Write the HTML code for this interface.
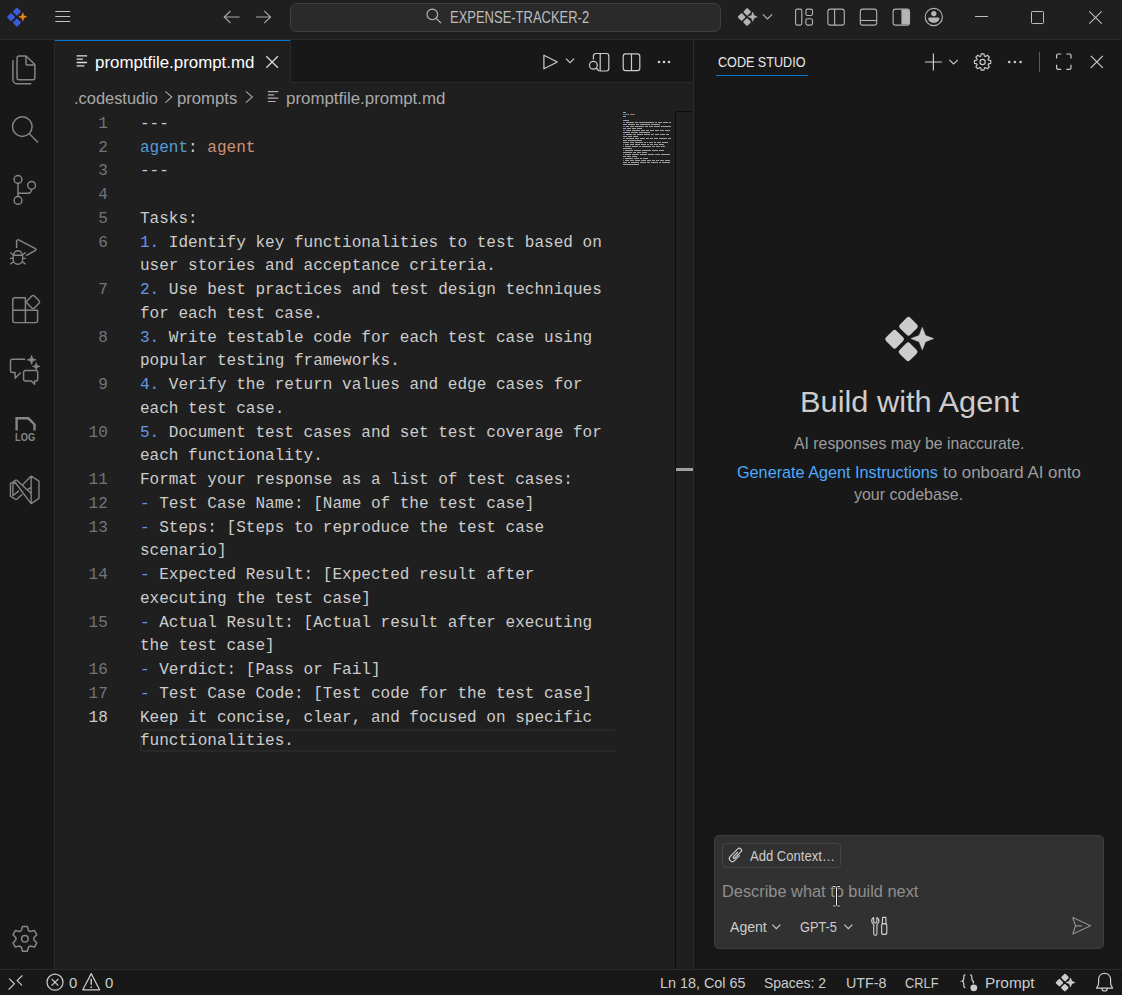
<!DOCTYPE html>
<html><head><meta charset="utf-8"><style>
html,body{margin:0;padding:0;}
body{width:1122px;height:995px;overflow:hidden;position:relative;background:#1f1f1f;font-family:"Liberation Sans",sans-serif;}
.t{position:absolute;white-space:pre;transform-origin:0 0;}
svg{overflow:visible}
</style></head><body>
<div style="position:absolute;left:0px;top:0px;width:1122px;height:39px;background:#1f1f1f;"></div>
<div style="position:absolute;left:0px;top:39px;width:1122px;height:1px;background:#2b2b2b;"></div>
<div style="position:absolute;left:0px;top:40px;width:54px;height:929px;background:#181818;"></div>
<div style="position:absolute;left:54px;top:40px;width:1px;height:929px;background:#2b2b2b;"></div>
<div style="position:absolute;left:55px;top:40px;width:638px;height:42px;background:#181818;"></div>
<div style="position:absolute;left:55px;top:82px;width:638px;height:1px;background:#2b2b2b;"></div>
<div style="position:absolute;left:55px;top:40px;width:235px;height:43px;background:#1f1f1f;"></div>
<div style="position:absolute;left:55px;top:40px;width:235px;height:1px;background:#0078d4;"></div>
<div style="position:absolute;left:290px;top:40px;width:1px;height:42px;background:#2b2b2b;"></div>
<div style="position:absolute;left:55px;top:83px;width:638px;height:886px;background:#1f1f1f;"></div>
<div style="position:absolute;left:693px;top:40px;width:1px;height:929px;background:#2b2b2b;"></div>
<div style="position:absolute;left:694px;top:40px;width:428px;height:929px;background:#181818;"></div>
<div style="position:absolute;left:0px;top:969px;width:1122px;height:1px;background:#2b2b2b;"></div>
<div style="position:absolute;left:0px;top:970px;width:1122px;height:25px;background:#181818;"></div>
<svg style="position:absolute;left:0px;top:0px;" width="40" height="40" viewBox="0 0 40 40" fill="none"><rect x="13.86" y="8.56" width="6.08" height="6.08" rx="0.60" fill="#3b5bdb" transform="rotate(45 16.90 11.60)"/><rect x="8.06" y="14.06" width="6.08" height="6.08" rx="0.60" fill="#3b5bdb" transform="rotate(45 11.10 17.10)"/><rect x="13.86" y="19.56" width="6.08" height="6.08" rx="0.60" fill="#3b5bdb" transform="rotate(45 16.90 22.60)"/><path d="M22.80 12.90 L23.85 15.75 L26.70 16.80 L23.85 17.85 L22.80 20.70 L21.75 17.85 L18.90 16.80 L21.75 15.75 Z" fill="#f0861a" stroke="#f0861a" stroke-width="0.6" stroke-linejoin="round"/></svg>
<svg style="position:absolute;left:50px;top:0px;" width="30" height="40" viewBox="0 0 30 40" fill="none"><path d="M5.3 11.5H20.2M5.3 16.5H20.2M5.3 21.5H20.2" stroke="#c0c0c0" stroke-width="1"/></svg>
<svg style="position:absolute;left:215px;top:0px;" width="70" height="40" viewBox="0 0 70 40" fill="none"><path d="M24.5 17H9.5M15.5 11L9.2 17L15.5 23" stroke="#a8a8a8" stroke-width="1.1" stroke-linejoin="miter"/><path d="M41 17H55.6M49.2 10.9L55.6 17L49.2 23.1" stroke="#a8a8a8" stroke-width="1.1"/></svg>
<div style="position:absolute;left:290px;top:3px;width:431px;height:29px;background:#2a2a2a;box-sizing:border-box;border:1px solid #3f3f3f;border-radius:7px;"></div>
<svg style="position:absolute;left:420px;top:0px;" width="30" height="34" viewBox="0 0 30 34" fill="none"><circle cx="12.3" cy="14.4" r="5.3" stroke="#bdbdbd" stroke-width="1.1"/><path d="M16.2 18.3L21 23.2" stroke="#bdbdbd" stroke-width="1.2"/></svg>
<div class="t" style="left:449.80px;top:9.00px;font-size:16.40px;line-height:16.40px;color:#bdbdbd;font-family:'Liberation Sans', sans-serif;transform:scaleX(0.7914);">EXPENSE-TRACKER-2</div>
<svg style="position:absolute;left:730px;top:0px;" width="40" height="34" viewBox="0 0 40 34" fill="none"><rect x="14.26" y="8.94" width="5.88" height="5.88" rx="1.04" fill="#b4b4b4" transform="rotate(45 17.20 11.88)"/><rect x="8.70" y="14.10" width="5.88" height="5.88" rx="1.04" fill="#b4b4b4" transform="rotate(45 11.64 17.04)"/><rect x="14.10" y="19.14" width="5.88" height="5.88" rx="1.04" fill="#b4b4b4" transform="rotate(45 17.04 22.08)"/><path d="M22.72 12.32 L23.97 15.55 L27.20 16.80 L23.97 18.05 L22.72 21.28 L21.47 18.05 L18.24 16.80 L21.47 15.55 Z" fill="#b4b4b4" stroke="#b4b4b4" stroke-width="0.6" stroke-linejoin="round"/></svg>
<svg style="position:absolute;left:755px;top:0px;" width="24" height="34" viewBox="0 0 24 34" fill="none"><path d="M7.9 14.3L12.5 18.9L17.1 14.3" stroke="#b4b4b4" stroke-width="1.1"/></svg>
<svg style="position:absolute;left:790px;top:0px;" width="160" height="34" viewBox="0 0 160 34" fill="none"><rect x="5.6" y="9.1" width="6.2" height="16" rx="1.6" stroke="#b4b4b4" stroke-width="1.1"/><rect x="15.9" y="9.1" width="6.6" height="6.4" rx="1.6" stroke="#b4b4b4" stroke-width="1.1"/><rect x="15.9" y="18.7" width="6.6" height="6.4" rx="1.6" stroke="#b4b4b4" stroke-width="1.1"/><rect x="37.9" y="9.1" width="16.4" height="16" rx="2.4" stroke="#b4b4b4" stroke-width="1.1"/><path d="M44.6 9.1V25.1" stroke="#b4b4b4" stroke-width="1.1"/><rect x="70.3" y="9.1" width="16.4" height="16" rx="2.4" stroke="#b4b4b4" stroke-width="1.1"/><path d="M70.3 20.5H86.7" stroke="#b4b4b4" stroke-width="1.1"/><rect x="103.1" y="9.1" width="16.4" height="16" rx="2.4" stroke="#b4b4b4" stroke-width="1.1"/><path d="M111.4 9.6H117.1A1.9 1.9 0 0 1 119 11.5V22.7A1.9 1.9 0 0 1 117.1 24.6H111.4Z" fill="#b4b4b4"/><circle cx="143.8" cy="17" r="8.6" stroke="#b4b4b4" stroke-width="1.1"/><circle cx="143.8" cy="13.6" r="2.6" fill="#b4b4b4"/><path d="M139.3 17.6H148.3A1 1 0 0 1 149.3 18.6C149.3 21.2 147 22.8 143.8 22.8C140.6 22.8 138.3 21.2 138.3 18.6A1 1 0 0 1 139.3 17.6Z" fill="#b4b4b4"/></svg>
<svg style="position:absolute;left:960px;top:0px;" width="162" height="34" viewBox="0 0 162 34" fill="none"><path d="M15 16.5H28" stroke="#bdbdbd" stroke-width="1"/><rect x="71.5" y="11.5" width="12" height="12" rx="0.8" stroke="#bdbdbd" stroke-width="1"/><path d="M129.3 11.3L141.7 23.7M141.7 11.3L129.3 23.7" stroke="#bdbdbd" stroke-width="1.1"/></svg>
<svg style="position:absolute;left:70px;top:40px;" width="30" height="40" viewBox="0 0 30 40" fill="none"><path d="M6.60 15.90H17.10M6.60 19.20H12.90M6.60 22.50H17.10M6.60 25.80H14.40" stroke="#e0e0e0" stroke-width="1.30"/></svg>
<div class="t" style="left:95.00px;top:54.75px;font-size:16.70px;line-height:16.70px;color:#ffffff;font-family:'Liberation Sans', sans-serif;transform:scaleX(1.0109);">promptfile.prompt.md</div>
<svg style="position:absolute;left:260px;top:40px;" width="30" height="40" viewBox="0 0 30 40" fill="none"><path d="M6.3 16.2L17.9 27.8M17.9 16.2L6.3 27.8" stroke="#dddddd" stroke-width="1.25"/></svg>
<svg style="position:absolute;left:535px;top:40px;" width="150" height="40" viewBox="0 0 150 40" fill="none"><path d="M8.9 15.2V28.8L22.3 22Z" stroke="#cccccc" stroke-width="1.2" stroke-linejoin="round"/><path d="M31 18.6L35 22.6L39 18.6" stroke="#cccccc" stroke-width="1.1"/><path d="M58.4 19.6V15.9A2.4 2.4 0 0 1 60.8 13.5H71.4A2.4 2.4 0 0 1 73.8 15.9V28.6A2.4 2.4 0 0 1 71.4 31H64.4M65.2 13.5V31" stroke="#cccccc" stroke-width="1.2"/><circle cx="58.4" cy="25.2" r="3.9" stroke="#cccccc" stroke-width="1.2"/><path d="M61.2 28L64.2 31" stroke="#cccccc" stroke-width="1.25"/><rect x="88.2" y="13.8" width="16.6" height="16.8" rx="2.4" stroke="#cccccc" stroke-width="1.2"/><path d="M96.5 13.8V30.6" stroke="#cccccc" stroke-width="1.2"/><circle cx="124" cy="22" r="1.3" fill="#cccccc"/><circle cx="129" cy="22" r="1.3" fill="#cccccc"/><circle cx="134" cy="22" r="1.3" fill="#cccccc"/></svg>
<div class="t" style="left:73.80px;top:90.00px;font-size:16.40px;line-height:16.40px;color:#a9a9a9;font-family:'Liberation Sans', sans-serif;transform:scaleX(1.0014);">.codestudio</div>
<svg style="position:absolute;left:160px;top:83px;" width="20" height="28" viewBox="0 0 20 28" fill="none"><path d="M5.4 8.3L11.8 14L5.4 19.7" stroke="#a9a9a9" stroke-width="1.1"/></svg>
<div class="t" style="left:177.30px;top:90.00px;font-size:16.40px;line-height:16.40px;color:#a9a9a9;font-family:'Liberation Sans', sans-serif;transform:scaleX(1.0179);">prompts</div>
<svg style="position:absolute;left:240px;top:83px;" width="20" height="28" viewBox="0 0 20 28" fill="none"><path d="M5.9 8.3L12.3 14L5.9 19.7" stroke="#a9a9a9" stroke-width="1.1"/></svg>
<svg style="position:absolute;left:260px;top:83px;" width="30" height="28" viewBox="0 0 30 28" fill="none"><path d="M7.80 8.60H18.30M7.80 11.90H14.10M7.80 15.20H18.30M7.80 18.50H15.60" stroke="#b0b0b0" stroke-width="1.20"/></svg>
<div class="t" style="left:285.60px;top:91.35px;font-size:16.70px;line-height:16.70px;color:#a9a9a9;font-family:'Liberation Sans', sans-serif;transform:scaleX(1.0109);">promptfile.prompt.md</div>
<div style="position:absolute;left:140px;top:729px;width:475px;height:23px;background:transparent;box-sizing:border-box;border:2px solid #282828;border-right:none;"></div>
<div class="t" style="left:98.17px;top:115.78px;font-size:16.04px;line-height:16.04px;color:#6e7681;font-family:'Liberation Mono', monospace;">1</div>
<div class="t" style="left:140px;top:115.78px;font-size:16.04px;line-height:16.04px;font-family:'Liberation Mono',monospace;"><span style="color:#cccccc">---</span></div>
<div class="t" style="left:98.17px;top:139.53px;font-size:16.04px;line-height:16.04px;color:#6e7681;font-family:'Liberation Mono', monospace;">2</div>
<div class="t" style="left:140px;top:139.53px;font-size:16.04px;line-height:16.04px;font-family:'Liberation Mono',monospace;"><span style="color:#569cd6">agent</span><span style="color:#cccccc">: </span><span style="color:#ce9178">agent</span></div>
<div class="t" style="left:98.17px;top:163.28px;font-size:16.04px;line-height:16.04px;color:#6e7681;font-family:'Liberation Mono', monospace;">3</div>
<div class="t" style="left:140px;top:163.28px;font-size:16.04px;line-height:16.04px;font-family:'Liberation Mono',monospace;"><span style="color:#cccccc">---</span></div>
<div class="t" style="left:98.17px;top:187.03px;font-size:16.04px;line-height:16.04px;color:#6e7681;font-family:'Liberation Mono', monospace;">4</div>
<div class="t" style="left:98.17px;top:210.78px;font-size:16.04px;line-height:16.04px;color:#6e7681;font-family:'Liberation Mono', monospace;">5</div>
<div class="t" style="left:140px;top:210.78px;font-size:16.04px;line-height:16.04px;font-family:'Liberation Mono',monospace;"><span style="color:#cccccc">Tasks:</span></div>
<div class="t" style="left:98.17px;top:234.53px;font-size:16.04px;line-height:16.04px;color:#6e7681;font-family:'Liberation Mono', monospace;">6</div>
<div class="t" style="left:140px;top:234.53px;font-size:16.04px;line-height:16.04px;font-family:'Liberation Mono',monospace;"><span style="color:#6796e6">1.</span><span style="color:#cccccc"> Identify key functionalities to test based on</span></div>
<div class="t" style="left:140px;top:258.28px;font-size:16.04px;line-height:16.04px;font-family:'Liberation Mono',monospace;"><span style="color:#cccccc">user stories and acceptance criteria.</span></div>
<div class="t" style="left:98.17px;top:282.03px;font-size:16.04px;line-height:16.04px;color:#6e7681;font-family:'Liberation Mono', monospace;">7</div>
<div class="t" style="left:140px;top:282.03px;font-size:16.04px;line-height:16.04px;font-family:'Liberation Mono',monospace;"><span style="color:#6796e6">2.</span><span style="color:#cccccc"> Use best practices and test design techniques</span></div>
<div class="t" style="left:140px;top:305.78px;font-size:16.04px;line-height:16.04px;font-family:'Liberation Mono',monospace;"><span style="color:#cccccc">for each test case.</span></div>
<div class="t" style="left:98.17px;top:329.53px;font-size:16.04px;line-height:16.04px;color:#6e7681;font-family:'Liberation Mono', monospace;">8</div>
<div class="t" style="left:140px;top:329.53px;font-size:16.04px;line-height:16.04px;font-family:'Liberation Mono',monospace;"><span style="color:#6796e6">3.</span><span style="color:#cccccc"> Write testable code for each test case using</span></div>
<div class="t" style="left:140px;top:353.28px;font-size:16.04px;line-height:16.04px;font-family:'Liberation Mono',monospace;"><span style="color:#cccccc">popular testing frameworks.</span></div>
<div class="t" style="left:98.17px;top:377.03px;font-size:16.04px;line-height:16.04px;color:#6e7681;font-family:'Liberation Mono', monospace;">9</div>
<div class="t" style="left:140px;top:377.03px;font-size:16.04px;line-height:16.04px;font-family:'Liberation Mono',monospace;"><span style="color:#6796e6">4.</span><span style="color:#cccccc"> Verify the return values and edge cases for</span></div>
<div class="t" style="left:140px;top:400.78px;font-size:16.04px;line-height:16.04px;font-family:'Liberation Mono',monospace;"><span style="color:#cccccc">each test case.</span></div>
<div class="t" style="left:88.55px;top:424.53px;font-size:16.04px;line-height:16.04px;color:#6e7681;font-family:'Liberation Mono', monospace;">10</div>
<div class="t" style="left:140px;top:424.53px;font-size:16.04px;line-height:16.04px;font-family:'Liberation Mono',monospace;"><span style="color:#6796e6">5.</span><span style="color:#cccccc"> Document test cases and set test coverage for</span></div>
<div class="t" style="left:140px;top:448.28px;font-size:16.04px;line-height:16.04px;font-family:'Liberation Mono',monospace;"><span style="color:#cccccc">each functionality.</span></div>
<div class="t" style="left:88.55px;top:472.03px;font-size:16.04px;line-height:16.04px;color:#6e7681;font-family:'Liberation Mono', monospace;">11</div>
<div class="t" style="left:140px;top:472.03px;font-size:16.04px;line-height:16.04px;font-family:'Liberation Mono',monospace;"><span style="color:#cccccc">Format your response as a list of test cases:</span></div>
<div class="t" style="left:88.55px;top:495.78px;font-size:16.04px;line-height:16.04px;color:#6e7681;font-family:'Liberation Mono', monospace;">12</div>
<div class="t" style="left:140px;top:495.78px;font-size:16.04px;line-height:16.04px;font-family:'Liberation Mono',monospace;"><span style="color:#6796e6">-</span><span style="color:#cccccc"> Test Case Name: [Name of the test case]</span></div>
<div class="t" style="left:88.55px;top:519.53px;font-size:16.04px;line-height:16.04px;color:#6e7681;font-family:'Liberation Mono', monospace;">13</div>
<div class="t" style="left:140px;top:519.53px;font-size:16.04px;line-height:16.04px;font-family:'Liberation Mono',monospace;"><span style="color:#6796e6">-</span><span style="color:#cccccc"> Steps: [Steps to reproduce the test case</span></div>
<div class="t" style="left:140px;top:543.28px;font-size:16.04px;line-height:16.04px;font-family:'Liberation Mono',monospace;"><span style="color:#cccccc">scenario]</span></div>
<div class="t" style="left:88.55px;top:567.03px;font-size:16.04px;line-height:16.04px;color:#6e7681;font-family:'Liberation Mono', monospace;">14</div>
<div class="t" style="left:140px;top:567.03px;font-size:16.04px;line-height:16.04px;font-family:'Liberation Mono',monospace;"><span style="color:#6796e6">-</span><span style="color:#cccccc"> Expected Result: [Expected result after</span></div>
<div class="t" style="left:140px;top:590.78px;font-size:16.04px;line-height:16.04px;font-family:'Liberation Mono',monospace;"><span style="color:#cccccc">executing the test case]</span></div>
<div class="t" style="left:88.55px;top:614.53px;font-size:16.04px;line-height:16.04px;color:#6e7681;font-family:'Liberation Mono', monospace;">15</div>
<div class="t" style="left:140px;top:614.53px;font-size:16.04px;line-height:16.04px;font-family:'Liberation Mono',monospace;"><span style="color:#6796e6">-</span><span style="color:#cccccc"> Actual Result: [Actual result after executing</span></div>
<div class="t" style="left:140px;top:638.28px;font-size:16.04px;line-height:16.04px;font-family:'Liberation Mono',monospace;"><span style="color:#cccccc">the test case]</span></div>
<div class="t" style="left:88.55px;top:662.03px;font-size:16.04px;line-height:16.04px;color:#6e7681;font-family:'Liberation Mono', monospace;">16</div>
<div class="t" style="left:140px;top:662.03px;font-size:16.04px;line-height:16.04px;font-family:'Liberation Mono',monospace;"><span style="color:#6796e6">-</span><span style="color:#cccccc"> Verdict: [Pass or Fail]</span></div>
<div class="t" style="left:88.55px;top:685.78px;font-size:16.04px;line-height:16.04px;color:#6e7681;font-family:'Liberation Mono', monospace;">17</div>
<div class="t" style="left:140px;top:685.78px;font-size:16.04px;line-height:16.04px;font-family:'Liberation Mono',monospace;"><span style="color:#6796e6">-</span><span style="color:#cccccc"> Test Case Code: [Test code for the test case]</span></div>
<div class="t" style="left:88.55px;top:709.53px;font-size:16.04px;line-height:16.04px;color:#cccccc;font-family:'Liberation Mono', monospace;">18</div>
<div class="t" style="left:140px;top:709.53px;font-size:16.04px;line-height:16.04px;font-family:'Liberation Mono',monospace;"><span style="color:#cccccc">Keep it concise, clear, and focused on specific</span></div>
<div class="t" style="left:140px;top:733.28px;font-size:16.04px;line-height:16.04px;font-family:'Liberation Mono',monospace;"><span style="color:#cccccc">functionalities.</span></div>
<div style="position:absolute;left:675px;top:111px;width:18px;height:858px;background:transparent;box-sizing:border-box;border-left:1px solid #0b0d10;border-top:1px solid #0b0d10;"></div>
<div style="position:absolute;left:676px;top:468px;width:17px;height:3px;background:#a0a0a0;"></div>
<svg style="position:absolute;left:623px;top:111px;opacity:0.72;shape-rendering:crispEdges;" width="52" height="60" viewBox="0 0 52 60" fill="none"><rect x="0" y="1.0" width="3" height="1" fill="#cccccc"/><rect x="0" y="3.0" width="5" height="1" fill="#569cd6"/><rect x="5" y="3.0" width="1" height="1" fill="#cccccc"/><rect x="7" y="3.0" width="5" height="1" fill="#ce9178"/><rect x="0" y="5.0" width="3" height="1" fill="#cccccc"/><rect x="0" y="9.0" width="6" height="1" fill="#cccccc"/><rect x="0" y="11.0" width="2" height="1" fill="#6796e6"/><rect x="3" y="11.0" width="8" height="1" fill="#cccccc"/><rect x="12" y="11.0" width="3" height="1" fill="#cccccc"/><rect x="16" y="11.0" width="15" height="1" fill="#cccccc"/><rect x="32" y="11.0" width="2" height="1" fill="#cccccc"/><rect x="35" y="11.0" width="4" height="1" fill="#cccccc"/><rect x="40" y="11.0" width="5" height="1" fill="#cccccc"/><rect x="46" y="11.0" width="2" height="1" fill="#cccccc"/><rect x="0" y="13.0" width="4" height="1" fill="#cccccc"/><rect x="5" y="13.0" width="7" height="1" fill="#cccccc"/><rect x="13" y="13.0" width="3" height="1" fill="#cccccc"/><rect x="17" y="13.0" width="10" height="1" fill="#cccccc"/><rect x="28" y="13.0" width="9" height="1" fill="#cccccc"/><rect x="0" y="15.0" width="2" height="1" fill="#6796e6"/><rect x="3" y="15.0" width="3" height="1" fill="#cccccc"/><rect x="7" y="15.0" width="4" height="1" fill="#cccccc"/><rect x="12" y="15.0" width="9" height="1" fill="#cccccc"/><rect x="22" y="15.0" width="3" height="1" fill="#cccccc"/><rect x="26" y="15.0" width="4" height="1" fill="#cccccc"/><rect x="31" y="15.0" width="6" height="1" fill="#cccccc"/><rect x="38" y="15.0" width="10" height="1" fill="#cccccc"/><rect x="0" y="17.0" width="3" height="1" fill="#cccccc"/><rect x="4" y="17.0" width="4" height="1" fill="#cccccc"/><rect x="9" y="17.0" width="4" height="1" fill="#cccccc"/><rect x="14" y="17.0" width="5" height="1" fill="#cccccc"/><rect x="0" y="19.0" width="2" height="1" fill="#6796e6"/><rect x="3" y="19.0" width="5" height="1" fill="#cccccc"/><rect x="9" y="19.0" width="8" height="1" fill="#cccccc"/><rect x="18" y="19.0" width="4" height="1" fill="#cccccc"/><rect x="23" y="19.0" width="3" height="1" fill="#cccccc"/><rect x="27" y="19.0" width="4" height="1" fill="#cccccc"/><rect x="32" y="19.0" width="4" height="1" fill="#cccccc"/><rect x="37" y="19.0" width="4" height="1" fill="#cccccc"/><rect x="42" y="19.0" width="5" height="1" fill="#cccccc"/><rect x="0" y="21.0" width="7" height="1" fill="#cccccc"/><rect x="8" y="21.0" width="7" height="1" fill="#cccccc"/><rect x="16" y="21.0" width="11" height="1" fill="#cccccc"/><rect x="0" y="23.0" width="2" height="1" fill="#6796e6"/><rect x="3" y="23.0" width="6" height="1" fill="#cccccc"/><rect x="10" y="23.0" width="3" height="1" fill="#cccccc"/><rect x="14" y="23.0" width="6" height="1" fill="#cccccc"/><rect x="21" y="23.0" width="6" height="1" fill="#cccccc"/><rect x="28" y="23.0" width="3" height="1" fill="#cccccc"/><rect x="32" y="23.0" width="4" height="1" fill="#cccccc"/><rect x="37" y="23.0" width="5" height="1" fill="#cccccc"/><rect x="43" y="23.0" width="3" height="1" fill="#cccccc"/><rect x="0" y="25.0" width="4" height="1" fill="#cccccc"/><rect x="5" y="25.0" width="4" height="1" fill="#cccccc"/><rect x="10" y="25.0" width="5" height="1" fill="#cccccc"/><rect x="0" y="27.0" width="2" height="1" fill="#6796e6"/><rect x="3" y="27.0" width="8" height="1" fill="#cccccc"/><rect x="12" y="27.0" width="4" height="1" fill="#cccccc"/><rect x="17" y="27.0" width="5" height="1" fill="#cccccc"/><rect x="23" y="27.0" width="3" height="1" fill="#cccccc"/><rect x="27" y="27.0" width="3" height="1" fill="#cccccc"/><rect x="31" y="27.0" width="4" height="1" fill="#cccccc"/><rect x="36" y="27.0" width="8" height="1" fill="#cccccc"/><rect x="45" y="27.0" width="3" height="1" fill="#cccccc"/><rect x="0" y="29.0" width="4" height="1" fill="#cccccc"/><rect x="5" y="29.0" width="14" height="1" fill="#cccccc"/><rect x="0" y="31.0" width="6" height="1" fill="#cccccc"/><rect x="7" y="31.0" width="4" height="1" fill="#cccccc"/><rect x="12" y="31.0" width="8" height="1" fill="#cccccc"/><rect x="21" y="31.0" width="2" height="1" fill="#cccccc"/><rect x="24" y="31.0" width="1" height="1" fill="#cccccc"/><rect x="26" y="31.0" width="4" height="1" fill="#cccccc"/><rect x="31" y="31.0" width="2" height="1" fill="#cccccc"/><rect x="34" y="31.0" width="4" height="1" fill="#cccccc"/><rect x="39" y="31.0" width="6" height="1" fill="#cccccc"/><rect x="0" y="33.0" width="1" height="1" fill="#6796e6"/><rect x="2" y="33.0" width="4" height="1" fill="#cccccc"/><rect x="7" y="33.0" width="4" height="1" fill="#cccccc"/><rect x="12" y="33.0" width="5" height="1" fill="#cccccc"/><rect x="18" y="33.0" width="5" height="1" fill="#cccccc"/><rect x="24" y="33.0" width="2" height="1" fill="#cccccc"/><rect x="27" y="33.0" width="3" height="1" fill="#cccccc"/><rect x="31" y="33.0" width="4" height="1" fill="#cccccc"/><rect x="36" y="33.0" width="5" height="1" fill="#cccccc"/><rect x="0" y="35.0" width="1" height="1" fill="#6796e6"/><rect x="2" y="35.0" width="6" height="1" fill="#cccccc"/><rect x="9" y="35.0" width="6" height="1" fill="#cccccc"/><rect x="16" y="35.0" width="2" height="1" fill="#cccccc"/><rect x="19" y="35.0" width="9" height="1" fill="#cccccc"/><rect x="29" y="35.0" width="3" height="1" fill="#cccccc"/><rect x="33" y="35.0" width="4" height="1" fill="#cccccc"/><rect x="38" y="35.0" width="4" height="1" fill="#cccccc"/><rect x="0" y="37.0" width="9" height="1" fill="#cccccc"/><rect x="0" y="39.0" width="1" height="1" fill="#6796e6"/><rect x="2" y="39.0" width="8" height="1" fill="#cccccc"/><rect x="11" y="39.0" width="7" height="1" fill="#cccccc"/><rect x="19" y="39.0" width="9" height="1" fill="#cccccc"/><rect x="29" y="39.0" width="6" height="1" fill="#cccccc"/><rect x="36" y="39.0" width="5" height="1" fill="#cccccc"/><rect x="0" y="41.0" width="9" height="1" fill="#cccccc"/><rect x="10" y="41.0" width="3" height="1" fill="#cccccc"/><rect x="14" y="41.0" width="4" height="1" fill="#cccccc"/><rect x="19" y="41.0" width="5" height="1" fill="#cccccc"/><rect x="0" y="43.0" width="1" height="1" fill="#6796e6"/><rect x="2" y="43.0" width="6" height="1" fill="#cccccc"/><rect x="9" y="43.0" width="7" height="1" fill="#cccccc"/><rect x="17" y="43.0" width="7" height="1" fill="#cccccc"/><rect x="25" y="43.0" width="6" height="1" fill="#cccccc"/><rect x="32" y="43.0" width="5" height="1" fill="#cccccc"/><rect x="38" y="43.0" width="9" height="1" fill="#cccccc"/><rect x="0" y="45.0" width="3" height="1" fill="#cccccc"/><rect x="4" y="45.0" width="4" height="1" fill="#cccccc"/><rect x="9" y="45.0" width="5" height="1" fill="#cccccc"/><rect x="0" y="47.0" width="1" height="1" fill="#6796e6"/><rect x="2" y="47.0" width="8" height="1" fill="#cccccc"/><rect x="11" y="47.0" width="5" height="1" fill="#cccccc"/><rect x="17" y="47.0" width="2" height="1" fill="#cccccc"/><rect x="20" y="47.0" width="5" height="1" fill="#cccccc"/><rect x="0" y="49.0" width="1" height="1" fill="#6796e6"/><rect x="2" y="49.0" width="4" height="1" fill="#cccccc"/><rect x="7" y="49.0" width="4" height="1" fill="#cccccc"/><rect x="12" y="49.0" width="5" height="1" fill="#cccccc"/><rect x="18" y="49.0" width="5" height="1" fill="#cccccc"/><rect x="24" y="49.0" width="4" height="1" fill="#cccccc"/><rect x="29" y="49.0" width="3" height="1" fill="#cccccc"/><rect x="33" y="49.0" width="3" height="1" fill="#cccccc"/><rect x="37" y="49.0" width="4" height="1" fill="#cccccc"/><rect x="42" y="49.0" width="5" height="1" fill="#cccccc"/><rect x="0" y="51.0" width="4" height="1" fill="#cccccc"/><rect x="5" y="51.0" width="2" height="1" fill="#cccccc"/><rect x="8" y="51.0" width="8" height="1" fill="#cccccc"/><rect x="17" y="51.0" width="6" height="1" fill="#cccccc"/><rect x="24" y="51.0" width="3" height="1" fill="#cccccc"/><rect x="28" y="51.0" width="7" height="1" fill="#cccccc"/><rect x="36" y="51.0" width="2" height="1" fill="#cccccc"/><rect x="39" y="51.0" width="8" height="1" fill="#cccccc"/><rect x="0" y="53.0" width="16" height="1" fill="#cccccc"/></svg>
<div class="t" style="left:717.50px;top:55.10px;font-size:14.20px;line-height:14.20px;color:#e7e7e7;font-family:'Liberation Sans', sans-serif;transform:scaleX(0.8873);">CODE STUDIO</div>
<div style="position:absolute;left:716px;top:75px;width:92px;height:1px;background:#0078d4;"></div>
<svg style="position:absolute;left:915px;top:40px;" width="207" height="44" viewBox="0 0 207 44" fill="none"><path d="M18.4 13.6V30.4M10 22H26.8" stroke="#cccccc" stroke-width="1.2"/><path d="M34.4 19.8L38.6 24L42.8 19.8" stroke="#cccccc" stroke-width="1.1"/><path d="M65.71 16.20 L66.24 13.81 L68.96 13.81 L69.49 16.20 L70.37 16.56 L72.43 15.25 L74.35 17.17 L73.04 19.23 L73.40 20.11 L75.79 20.64 L75.79 23.36 L73.40 23.89 L73.04 24.77 L74.35 26.83 L72.43 28.75 L70.37 27.44 L69.49 27.80 L68.96 30.19 L66.24 30.19 L65.71 27.80 L64.83 27.44 L62.77 28.75 L60.85 26.83 L62.16 24.77 L61.80 23.89 L59.41 23.36 L59.41 20.64 L61.80 20.11 L62.16 19.23 L60.85 17.17 L62.77 15.25 L64.83 16.56Z" stroke="#cccccc" stroke-width="1.15" stroke-linejoin="round"/><circle cx="67.6" cy="22" r="2.6" stroke="#cccccc" stroke-width="1.15"/><circle cx="94.2" cy="22" r="1.3" fill="#cccccc"/><circle cx="99.9" cy="22" r="1.3" fill="#cccccc"/><circle cx="105.6" cy="22" r="1.3" fill="#cccccc"/><path d="M124.5 12V32" stroke="#5a5a5a" stroke-width="1"/><path d="M141.6 18.5V15.6A1.6 1.6 0 0 1 143.2 14H146.2M151.4 14H154.4A1.6 1.6 0 0 1 156 15.6V18.5M156 24.8V27.8A1.6 1.6 0 0 1 154.4 29.4H151.4M146.2 29.4H143.2A1.6 1.6 0 0 1 141.6 27.8V24.8" stroke="#cccccc" stroke-width="1.2"/><path d="M175.8 15.8L187.8 27.8M187.8 15.8L175.8 27.8" stroke="#cccccc" stroke-width="1.2"/></svg>
<svg style="position:absolute;left:860px;top:290px;" width="100" height="100" viewBox="0 0 100 100" fill="none"><rect x="41.15" y="28.95" width="14.71" height="14.71" rx="2.60" fill="#cccccc" transform="rotate(45 48.50 36.30)"/><rect x="27.25" y="41.85" width="14.71" height="14.71" rx="2.60" fill="#cccccc" transform="rotate(45 34.60 49.20)"/><rect x="40.75" y="54.45" width="14.71" height="14.71" rx="2.60" fill="#cccccc" transform="rotate(45 48.10 61.80)"/><path d="M62.30 37.40 L65.44 45.46 L73.50 48.60 L65.44 51.74 L62.30 59.80 L59.16 51.74 L51.10 48.60 L59.16 45.46 Z" fill="#cccccc" stroke="#cccccc" stroke-width="0.6" stroke-linejoin="round"/></svg>
<div class="t" style="left:799.50px;top:387.00px;font-size:29.80px;line-height:29.80px;color:#cccccc;font-family:'Liberation Sans', sans-serif;transform:scaleX(1.0328);">Build with Agent</div>
<div class="t" style="left:794.00px;top:435.10px;font-size:16.20px;line-height:16.20px;color:#9d9d9d;font-family:'Liberation Sans', sans-serif;transform:scaleX(0.9770);">AI responses may be inaccurate.</div>
<div class="t" style="left:737.00px;top:464.40px;font-size:16.40px;line-height:16.40px;color:#4daafc;font-family:'Liberation Sans', sans-serif;transform:scaleX(0.9887);">Generate Agent Instructions</div>
<div class="t" style="left:942.60px;top:464.40px;font-size:16.40px;line-height:16.40px;color:#9d9d9d;font-family:'Liberation Sans', sans-serif;transform:scaleX(1.0295);">to onboard AI onto</div>
<div class="t" style="left:854.30px;top:485.60px;font-size:16.40px;line-height:16.40px;color:#9d9d9d;font-family:'Liberation Sans', sans-serif;transform:scaleX(0.9738);">your codebase.</div>
<div style="position:absolute;left:714px;top:835px;width:390px;height:114px;background:#313131;box-sizing:border-box;border:1px solid #3c3c3c;border-radius:5px;"></div>
<div style="position:absolute;left:722px;top:843px;width:119px;height:25px;background:transparent;box-sizing:border-box;border:1px solid #454545;border-radius:4px;"></div>
<svg style="position:absolute;left:722px;top:843px;" width="30" height="25" viewBox="0 0 30 25" fill="none"><g transform="translate(14.2 11.6) rotate(45)"><path d="M-0.6 -2.4V3.4A1 1 0 0 0 1.4 3.4V-5.2A2.2 2.2 0 0 0 -3 -5.2V5.4A3 3 0 0 0 3 5.4V-1.6" stroke="#cccccc" stroke-width="1.15" stroke-linecap="round"/></g></svg>
<div class="t" style="left:750.20px;top:849.20px;font-size:14.40px;line-height:14.40px;color:#cccccc;font-family:'Liberation Sans', sans-serif;transform:scaleX(0.9076);">Add Context…</div>
<div class="t" style="left:722.00px;top:882.90px;font-size:16.20px;line-height:16.20px;color:#8f8f8f;font-family:'Liberation Sans', sans-serif;transform:scaleX(1.0103);">Describe what to build next</div>
<svg style="position:absolute;left:829px;top:883px;" width="14" height="30" viewBox="0 0 14 30" fill="none"><path d="M4.2 3.6H6.6M8.4 3.6H10.8M7.5 4.2V22.4M4.2 23H6.6M8.4 23H10.8" stroke="#111111" stroke-width="2.6"/><path d="M4.2 3.6H6.6M8.4 3.6H10.8M7.5 4.2V22.4M4.2 23H6.6M8.4 23H10.8" stroke="#f0f0f0" stroke-width="1.1"/></svg>
<div class="t" style="left:729.50px;top:919.70px;font-size:14.60px;line-height:14.60px;color:#cccccc;font-family:'Liberation Sans', sans-serif;transform:scaleX(0.9645);">Agent</div>
<svg style="position:absolute;left:767px;top:916px;" width="20" height="20" viewBox="0 0 20 20" fill="none"><path d="M5.3 8.6L9.3 12.6L13.3 8.6" stroke="#cccccc" stroke-width="1.1"/></svg>
<div class="t" style="left:800.30px;top:919.70px;font-size:14.60px;line-height:14.60px;color:#cccccc;font-family:'Liberation Sans', sans-serif;transform:scaleX(0.8770);">GPT-5</div>
<svg style="position:absolute;left:838px;top:916px;" width="20" height="20" viewBox="0 0 20 20" fill="none"><path d="M6.3 8.6L10.3 12.6L14.3 8.6" stroke="#cccccc" stroke-width="1.1"/></svg>
<svg style="position:absolute;left:865px;top:912px;" width="30" height="30" viewBox="0 0 30 30" fill="none"><path d="M8.7 5.6V9.2A1.6 1.6 0 0 0 11.9 9.2V5.6A3.9 3.9 0 0 1 13.8 9.8C13.2 11.2 12.2 12 11.9 12.4V21.6A1.6 1.6 0 0 1 8.7 21.6V12.4C8.4 12 7.4 11.2 6.8 9.8A3.9 3.9 0 0 1 8.7 5.6Z" stroke="#cccccc" stroke-width="1.15" stroke-linejoin="round"/><path d="M17.6 5.3H20.8L21.1 11.6H17.3Z" stroke="#cccccc" stroke-width="1.15" stroke-linejoin="round"/><rect x="16.6" y="11.6" width="5.2" height="10.8" rx="2" stroke="#cccccc" stroke-width="1.15"/></svg>
<svg style="position:absolute;left:1065px;top:910px;" width="34" height="30" viewBox="0 0 34 30" fill="none"><path d="M7.8 7.6L25.6 15.8L7.8 24L10.5 15.8Z M10.5 15.8H17" stroke="#8f8f8f" stroke-width="1.15" stroke-linejoin="round"/></svg>
<svg style="position:absolute;left:0px;top:40px;" width="54" height="929" viewBox="0 0 54 929" fill="none"><path d="M19.2 15.9H26L34.9 24.6V37.8A2 2 0 0 1 32.9 39.8H19A2 2 0 0 1 17 37.8V18.1A2.2 2.2 0 0 1 19.2 15.9Z" stroke="#868686" stroke-width="1.45" stroke-linejoin="round"/><path d="M26 16.2V23.9A1 1 0 0 0 27 24.9H34.7" stroke="#868686" stroke-width="1.45"/><path d="M12.9 20.2V39.4A4.4 4.4 0 0 0 17.3 43.8H31.3" stroke="#868686" stroke-width="1.45"/><circle cx="22.3" cy="86.6" r="9.8" stroke="#868686" stroke-width="1.45"/><path d="M29.2 93.6L38 102.4" stroke="#868686" stroke-width="1.4"/><circle cx="18" cy="139.4" r="3.9" stroke="#868686" stroke-width="1.45"/><circle cx="31.6" cy="145.3" r="3.9" stroke="#868686" stroke-width="1.45"/><circle cx="18" cy="160.4" r="3.9" stroke="#868686" stroke-width="1.45"/><path d="M18 143.3V156.5M31.6 149.2V149.6C31.6 151.6 30 153.2 28 153.2H18" stroke="#868686" stroke-width="1.45"/><path d="M16.6 208V201.2A1.4 1.4 0 0 1 18.6 199.9L35.4 208.6A1 1 0 0 1 35.4 210.4L26.1 215.7" stroke="#868686" stroke-width="1.45" stroke-linejoin="round"/><path d="M13.6 215.2C13.6 212.6 15.6 210.7 17.9 210.7C20.2 210.7 22.2 212.6 22.2 215.2Z M13.2 215.2H22.6V219.6A4.7 4.6 0 0 1 13.2 219.6Z" stroke="#868686" stroke-width="1.35" stroke-linejoin="round"/><path d="M10.2 212.4L13.4 215M25.6 212.4L22.4 215M10 218.4H13.2M22.6 218.4H25.8M10.2 224.2L13.6 221.6M25.6 224.2L22.2 221.6" stroke="#868686" stroke-width="1.35"/><path d="M14.8 257.8H25.4V270.2H37.6V280.6A2 2 0 0 1 35.6 282.6H14.8A2 2 0 0 1 12.8 280.6V259.8A2 2 0 0 1 14.8 257.8Z M12.8 270.2H25.4V282.6" stroke="#868686" stroke-width="1.45" stroke-linejoin="round"/><rect x="28" y="256.9" width="10.2" height="10.2" rx="1.8" transform="rotate(45 33.1 262)" stroke="#868686" stroke-width="1.45"/><path d="M25.1 319.3H12.5A2 2 0 0 0 10.5 321.3V330.4A2 2 0 0 0 12.5 332.4H15.1V338.2L20.8 332.6" stroke="#868686" stroke-width="1.45" stroke-linejoin="round"/><path d="M25.6 330.4H35.7A2 2 0 0 1 37.7 332.4V339A2 2 0 0 1 35.7 341H34.6V344.2L31.4 341H25.6A2 2 0 0 1 23.6 339V332.4A2 2 0 0 1 25.6 330.4Z" stroke="#868686" stroke-width="1.45" stroke-linejoin="round"/><path d="M31.60 315.20 L32.80 318.60 L36.20 319.80 L32.80 321.00 L31.60 324.40 L30.40 321.00 L27.00 319.80 L30.40 318.60 Z" fill="#868686" stroke="#868686" stroke-width="0.6" stroke-linejoin="round"/><path d="M36.20 322.60 L37.19 325.41 L40.00 326.40 L37.19 327.39 L36.20 330.20 L35.21 327.39 L32.40 326.40 L35.21 325.41 Z" fill="#868686" stroke="#868686" stroke-width="0.6" stroke-linejoin="round"/><path d="M16.6 390.6V378.3H28.4L34.5 384.4V390.6" stroke="#868686" stroke-width="2.4"/><text x="15" y="401.1" font-family="Liberation Sans" font-weight="700" font-size="10.6" textLength="20.2" lengthAdjust="spacingAndGlyphs" fill="#868686">LOG</text><path d="M31.13 436.03L38.97 441.06L38.97 458.34L31.13 463.57L31.13 436.03M16.26 439.85L10.43 443.67L10.43 456.13L16.26 459.75M12.84 444.27L12.84 455.73M16.26 439.85L31.13 453.52M15.05 442.26L31.13 463.57M31.13 436.03L22.69 444.67M31.13 447.29L26.91 450.10M16.26 459.75L22.29 454.32M12.84 455.73L18.87 450.90M15.05 442.26L12.84 444.27" stroke="#868686" stroke-width="1.35" stroke-linejoin="round"/><path d="M21.24 890.58 L22.54 886.42 L27.26 886.42 L28.56 890.58 L30.19 891.52 L34.44 890.57 L36.80 894.66 L33.85 897.86 L33.85 899.74 L36.80 902.94 L34.44 907.03 L30.19 906.08 L28.56 907.02 L27.26 911.18 L22.54 911.18 L21.24 907.02 L19.61 906.08 L15.36 907.03 L13.00 902.94 L15.95 899.74 L15.95 897.86 L13.00 894.66 L15.36 890.57 L19.61 891.52Z" stroke="#868686" stroke-width="1.5" stroke-linejoin="round"/><circle cx="24.9" cy="898.8" r="3.3" stroke="#868686" stroke-width="1.5"/></svg>
<svg style="position:absolute;left:0px;top:970px;" width="130" height="25" viewBox="0 0 130 25" fill="none"><path d="M8.6 19.6L14.4 13.8L9.2 8.6M22.4 5.4L17.2 10.6L22 15.4" stroke="#cccccc" stroke-width="1.2"/><circle cx="55" cy="12.2" r="8" stroke="#cccccc" stroke-width="1.2"/><path d="M51.6 8.8L58.4 15.6M58.4 8.8L51.6 15.6" stroke="#cccccc" stroke-width="1.2"/><path d="M91.2 3.6L99.6 19.8H82.8Z" stroke="#cccccc" stroke-width="1.2" stroke-linejoin="round"/><path d="M91.2 8.8V14.8" stroke="#cccccc" stroke-width="1.4"/><circle cx="91.2" cy="17.1" r="0.9" fill="#cccccc"/></svg>
<div class="t" style="left:69.00px;top:975.20px;font-size:15.00px;line-height:15.00px;color:#cccccc;font-family:'Liberation Sans', sans-serif;transform:scaleX(0.9949);">0</div>
<div class="t" style="left:104.60px;top:975.20px;font-size:15.00px;line-height:15.00px;color:#cccccc;font-family:'Liberation Sans', sans-serif;transform:scaleX(0.9949);">0</div>
<div class="t" style="left:659.50px;top:975.80px;font-size:14.80px;line-height:14.80px;color:#cccccc;font-family:'Liberation Sans', sans-serif;transform:scaleX(0.9711);">Ln 18, Col 65</div>
<div class="t" style="left:764.00px;top:975.80px;font-size:14.80px;line-height:14.80px;color:#cccccc;font-family:'Liberation Sans', sans-serif;transform:scaleX(0.9420);">Spaces: 2</div>
<div class="t" style="left:845.50px;top:975.80px;font-size:14.80px;line-height:14.80px;color:#cccccc;font-family:'Liberation Sans', sans-serif;transform:scaleX(0.9659);">UTF-8</div>
<div class="t" style="left:905.00px;top:975.80px;font-size:14.80px;line-height:14.80px;color:#cccccc;font-family:'Liberation Sans', sans-serif;transform:scaleX(0.8668);">CRLF</div>
<svg style="position:absolute;left:955px;top:970px;" width="30" height="25" viewBox="0 0 30 25" fill="none"><path d="M10.4 4.8C8.6 4.8 8.8 6.4 8.8 8.2C8.8 10 8.6 10.8 7.2 11.2C8.6 11.6 8.8 12.4 8.8 14.2C8.8 16 8.6 17.6 10.4 17.6M15.2 4.8C17 4.8 16.8 6.4 16.8 8.2C16.8 10 17 11 18.4 11.4V13.6" stroke="#cccccc" stroke-width="1.25"/><circle cx="18.8" cy="17.8" r="3.4" fill="#cccccc"/></svg>
<div class="t" style="left:985.00px;top:975.80px;font-size:14.80px;line-height:14.80px;color:#cccccc;font-family:'Liberation Sans', sans-serif;transform:scaleX(1.0377);">Prompt</div>
<svg style="position:absolute;left:1050px;top:970px;" width="30" height="25" viewBox="0 0 30 25" fill="none"><rect x="12.06" y="4.54" width="5.88" height="5.88" rx="1.04" fill="#cccccc" transform="rotate(45 15.00 7.48)"/><rect x="6.50" y="9.70" width="5.88" height="5.88" rx="1.04" fill="#cccccc" transform="rotate(45 9.44 12.64)"/><rect x="11.90" y="14.74" width="5.88" height="5.88" rx="1.04" fill="#cccccc" transform="rotate(45 14.84 17.68)"/><path d="M20.52 7.92 L21.77 11.15 L25.00 12.40 L21.77 13.65 L20.52 16.88 L19.27 13.65 L16.04 12.40 L19.27 11.15 Z" fill="#cccccc" stroke="#cccccc" stroke-width="0.6" stroke-linejoin="round"/></svg>
<svg style="position:absolute;left:1090px;top:970px;" width="32" height="25" viewBox="0 0 32 25" fill="none"><path d="M14.6 3.4C11 3.4 8.6 6 8.6 9.6V14.2L6.6 18.2H22.6L20.6 14.2V9.6C20.6 6 18.2 3.4 14.6 3.4Z M12 18.4A2.6 2.6 0 0 0 17.2 18.4" stroke="#cccccc" stroke-width="1.2" stroke-linejoin="round"/></svg>
</body></html>
